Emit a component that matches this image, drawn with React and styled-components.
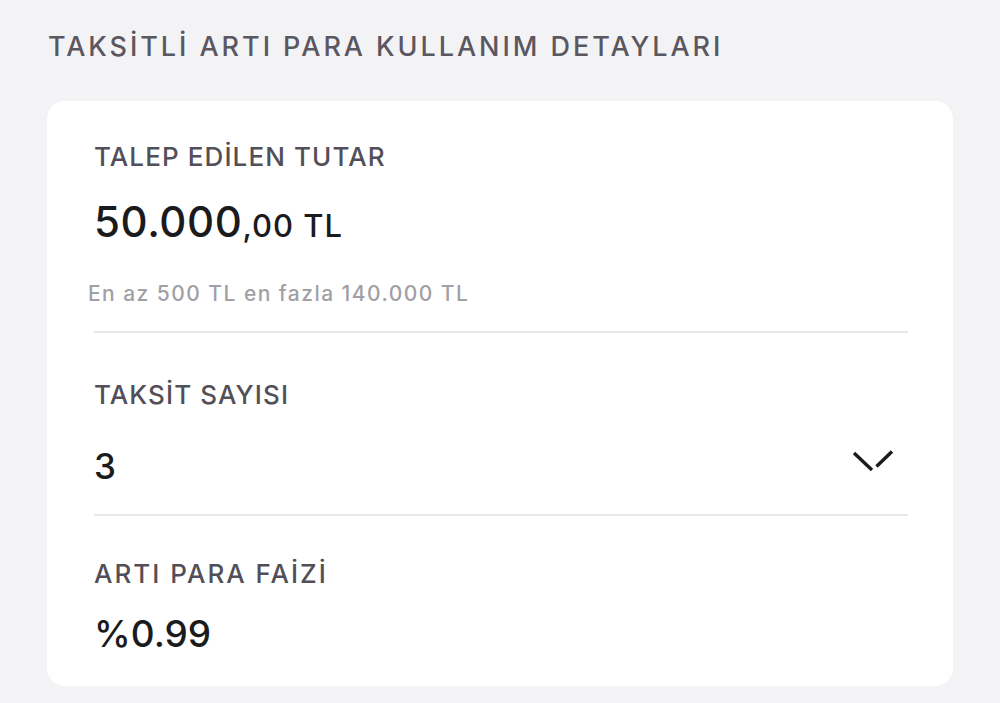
import React from "react";
import styled, { createGlobalStyle } from "styled-components";

const GlobalStyle = createGlobalStyle`
  html, body {
    margin: 0;
    padding: 0;
    background: #f3f3f6;
  }
  body {
    font-family: Inter, "Noto Sans", sans-serif;
    -webkit-font-smoothing: antialiased;
  }
`;

const Page = styled.div`
  padding: 31px 47px 17px 47px;
  width: 906px;
`;

const Title = styled.h2`
  margin: 0 0 0 1px;
  font-size: 27px;
  line-height: 32px;
  font-weight: 500;
  letter-spacing: 2.95px;
  color: #5b5761;
  white-space: nowrap;
`;

const Card = styled.div`
  margin-top: 38px;
  background: #ffffff;
  border-radius: 18px;
  padding: 40px 45px 0 47px;
  height: 545px;
`;

const Section = styled.div`
  padding-bottom: ${(p) => p.$bottom || 0}px;
  border-bottom: ${(p) => (p.$divider ? "2px solid #e8e8eb" : "none")};
  margin-bottom: ${(p) => p.$gap || 0}px;
`;

const Label = styled.div`
  font-size: 26px;
  line-height: 32px;
  font-weight: 500;
  letter-spacing: ${(p) => p.$spacing || 1.1}px;
  color: #524f58;
  white-space: nowrap;
`;

const Amount = styled.div`
  margin-top: 25px;
  font-size: 42px;
  line-height: 48px;
  font-weight: 500;
  color: #1b1b1d;
  letter-spacing: 0.6px;

  small {
    font-size: 31px;
    letter-spacing: 1px;
  }
`;

const Hint = styled.div`
  margin: 31px 0 0 -6px;
  font-size: 21px;
  line-height: 26px;
  font-weight: 500;
  letter-spacing: 1.45px;
  color: #a29fa6;
  white-space: nowrap;
`;

const SelectRow = styled.div`
  margin-top: 35px;
  display: flex;
  align-items: center;
  justify-content: space-between;
  padding-right: 14px;

  svg {
    margin-bottom: 8px;
  }
`;

const Value = styled.div`
  font-size: 35px;
  line-height: 40px;
  font-weight: 500;
  color: #1b1b1d;
`;

const Rate = styled(Value)`
  margin-top: 24px;
  font-size: 37px;
`;

const Chevron = () => (
  <svg width="42" height="24" viewBox="0 0 42 24">
    <path d="M2 3 L20 20" stroke="#1b1b1d" strokeWidth="3.4" />
    <path d="M24.5 16.5 L40 1.5" stroke="#1b1b1d" strokeWidth="3.4" />
  </svg>
);

export default function App() {
  return (
    <>
      <GlobalStyle />
      <Page>
        <Title>TAKSİTLİ ARTI PARA KULLANIM DETAYLARI</Title>
        <Card>
          <Section $divider $bottom={24} $gap={46}>
            <Label>TALEP EDİLEN TUTAR</Label>
            <Amount>
              50.000<small>,00 TL</small>
            </Amount>
            <Hint>En az 500 TL en fazla 140.000 TL</Hint>
          </Section>
          <Section $divider $bottom={28} $gap={42}>
            <Label>TAKSİT SAYISI</Label>
            <SelectRow>
              <Value>3</Value>
              <Chevron />
            </SelectRow>
          </Section>
          <Section>
            <Label $spacing={2}>ARTI PARA FAİZİ</Label>
            <Rate>%0.99</Rate>
          </Section>
        </Card>
      </Page>
    </>
  );
}
